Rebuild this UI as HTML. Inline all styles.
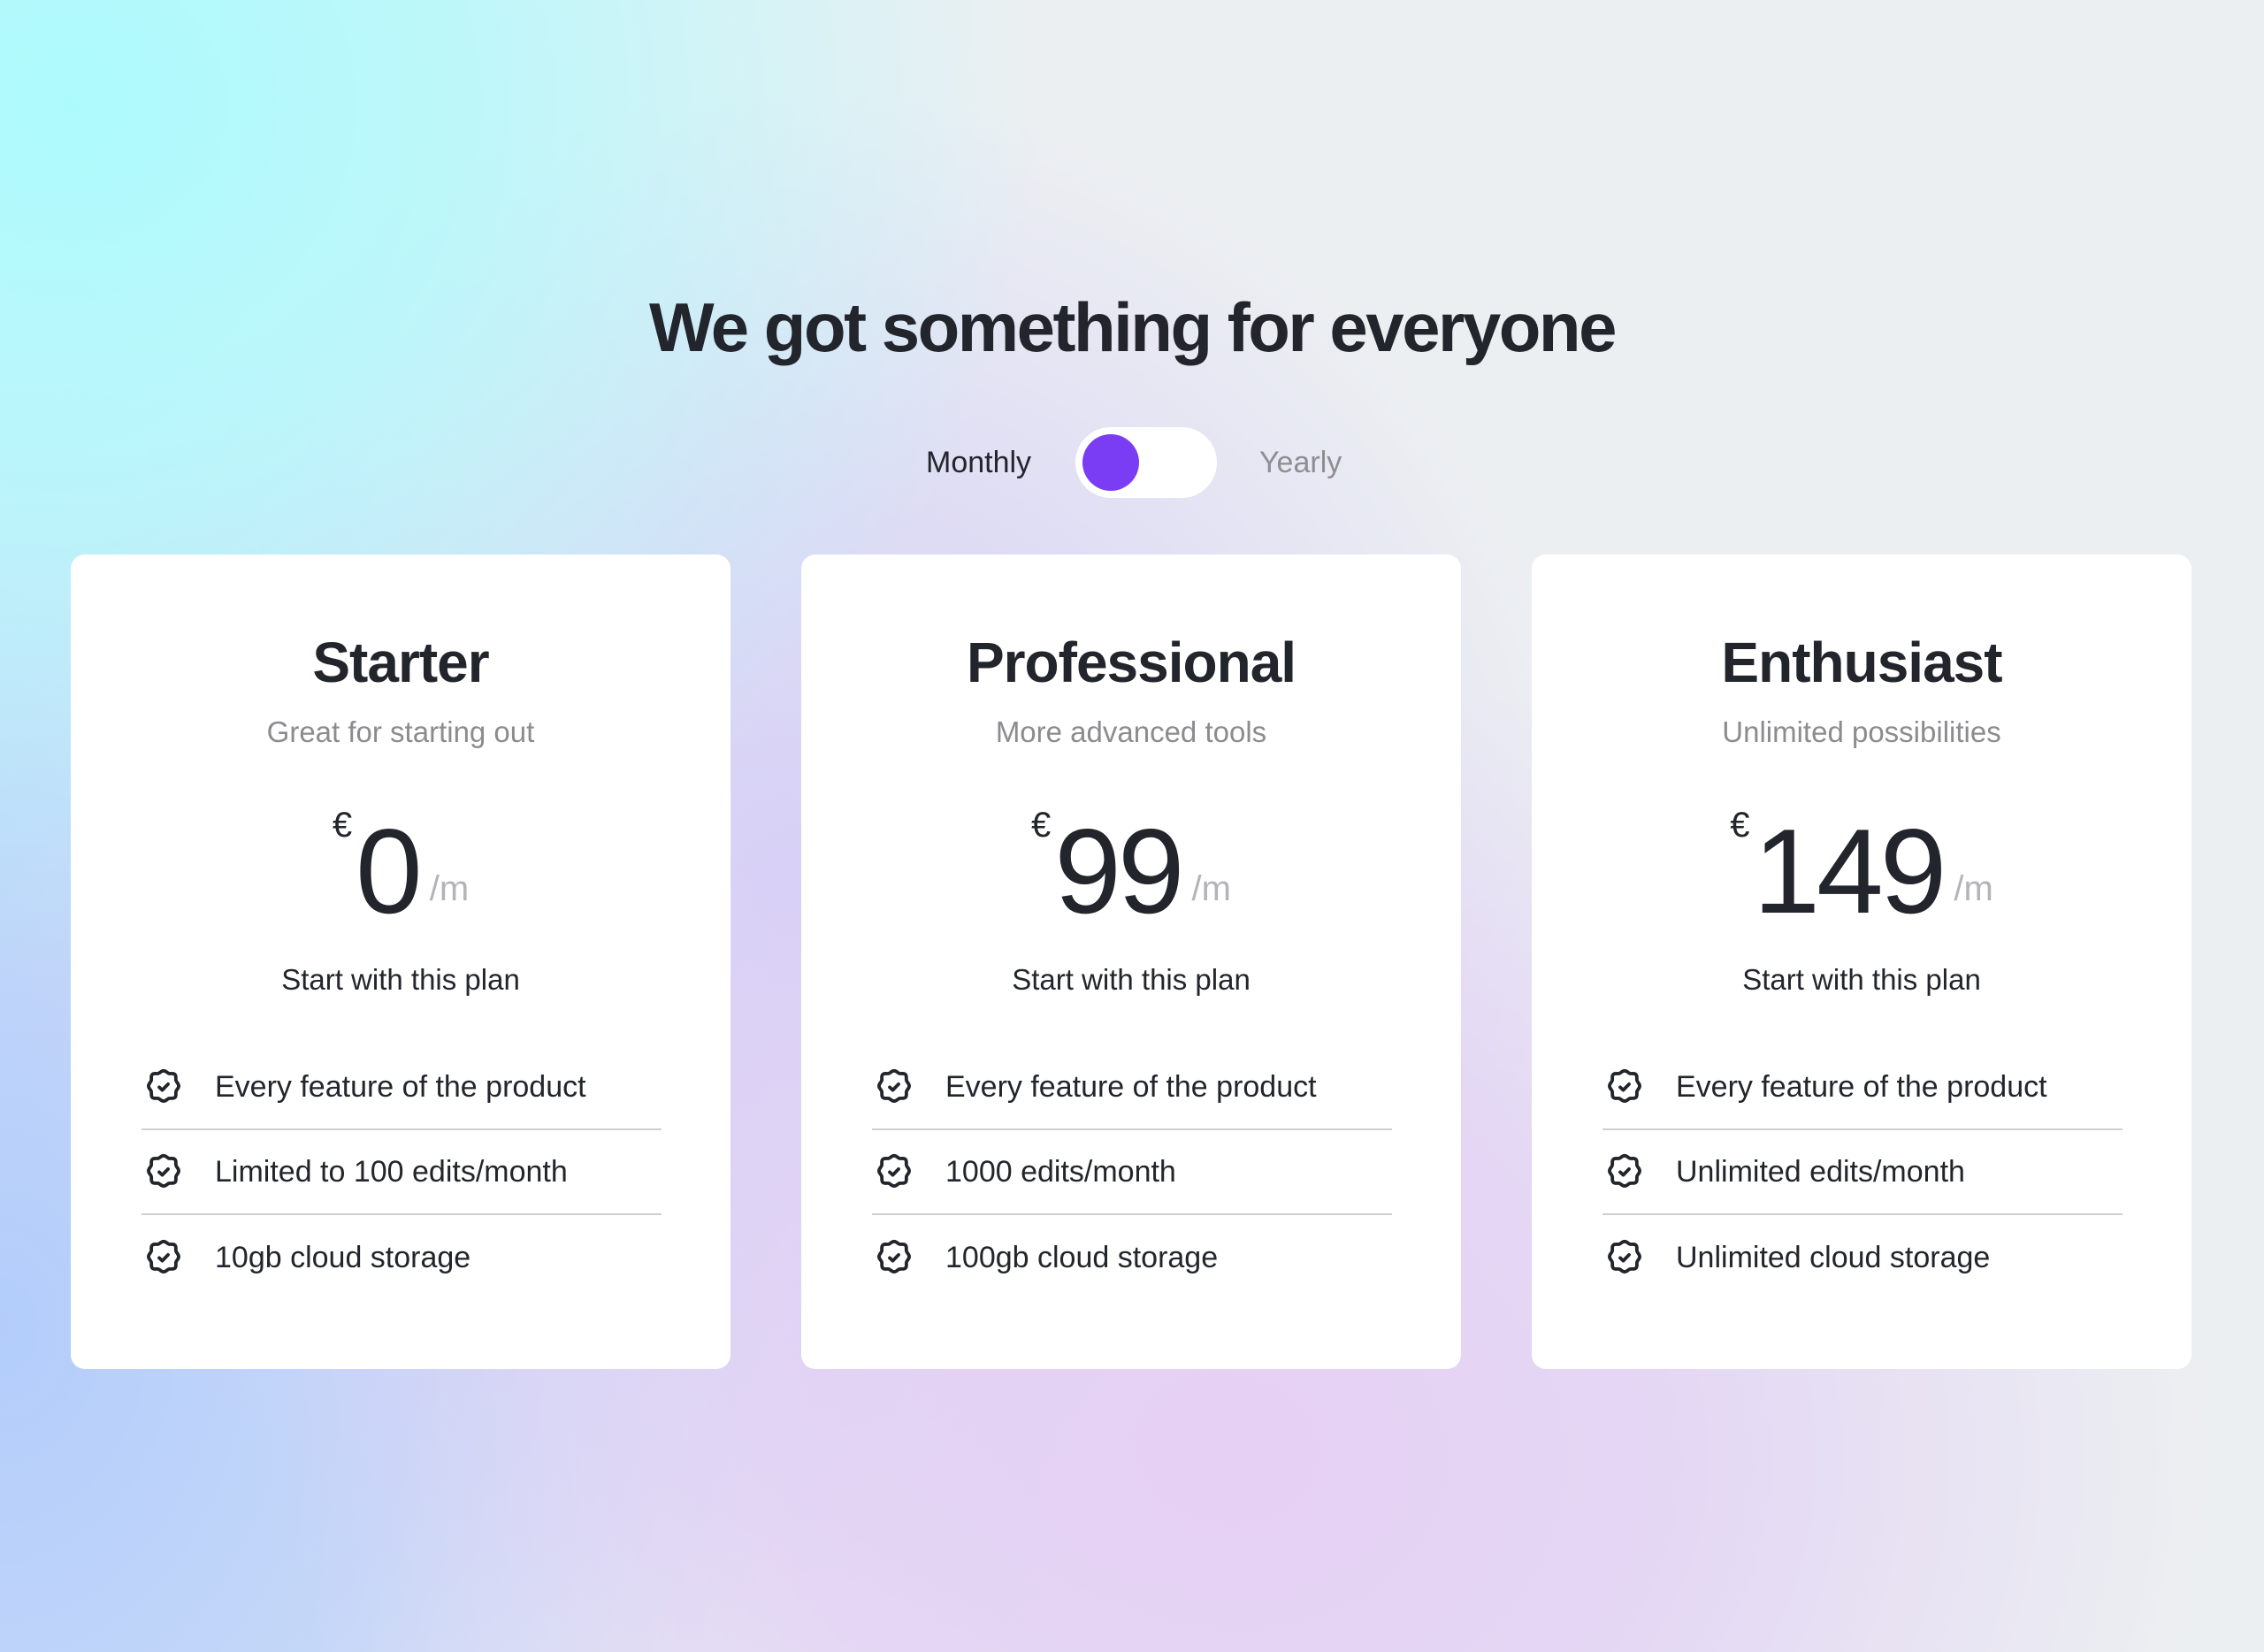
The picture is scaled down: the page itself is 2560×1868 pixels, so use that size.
<!DOCTYPE html>
<html><head><meta charset="utf-8"><style>
*{margin:0;padding:0;box-sizing:border-box}
html,body{width:2560px;height:1868px;overflow:hidden}
body{font-family:"Liberation Sans",sans-serif;color:#22252b;position:relative;
background:
radial-gradient(ellipse 1100px 1000px at 80px 120px,#adfafd 0%,rgba(173,250,253,0.75) 40%,rgba(173,250,253,0) 100%),
radial-gradient(ellipse 1100px 900px at 1400px 1650px,#e6d0f4 0%,rgba(225,205,245,0.7) 45%,rgba(225,205,245,0) 100%),
radial-gradient(ellipse 900px 900px at 900px 1000px,#d6d0f6 0%,rgba(214,208,246,0.6) 50%,rgba(214,208,246,0) 100%),
radial-gradient(ellipse 900px 1200px at 0px 1500px,#b3cdfb 0%,rgba(179,205,251,0.7) 50%,rgba(179,205,251,0) 100%),
#eceff2;}
h1{position:absolute;top:325px;left:0;width:2560px;text-align:center;font-size:78px;font-weight:bold;letter-spacing:-2.5px}
.tg{position:absolute;top:504px;font-size:34px}
.pill{position:absolute;left:1216px;top:483px;width:160px;height:80px;border-radius:40px;background:#fff}
.knob{position:absolute;left:8px;top:8px;width:64px;height:64px;border-radius:50%;background:#7b3df3}
.card{position:absolute;top:627px;width:746px;height:921px;background:#fff;border-radius:16px}
.t{position:absolute;width:100%;text-align:center;font-size:64px;font-weight:bold;letter-spacing:-1px}
.s{position:absolute;width:100%;text-align:center;font-size:33px;color:#8c8c90}
.price{position:absolute;width:100%;text-align:center;white-space:nowrap;height:140px}
.price .e{font-size:40px;vertical-align:top;position:relative;top:-6px;margin-right:4px}
.price .n{font-size:136px;line-height:1;letter-spacing:-4px}
.price .m{font-size:40px;color:#b4b4b8;margin-left:12px;position:relative;top:-14px}
.st{position:absolute;width:100%;text-align:center;font-size:33px}
.f{position:absolute;left:80px;width:588px;height:96px;font-size:34px;display:flex;align-items:center}
.f svg{width:46px;height:46px;margin-left:2px;margin-right:35px;flex:none}
.f.b{border-bottom:2px solid #cfcfcf}
</style></head><body>
<h1>We got something for everyone</h1>
<div class="tg" style="left:1047px">Monthly</div>
<div class="pill"><div class="knob"></div></div>
<div class="tg" style="left:1424px;color:#8d8d92">Yearly</div>

<svg width="0" height="0" style="position:absolute"><defs><symbol id="ck" viewBox="0 0 24 24"><path fill="none" stroke="#22252b" stroke-width="2" stroke-linecap="round" stroke-linejoin="round" d="M12 2.5c1.5 0 2 1.3 3.2 1.6c1.2 .3 2.6 -.4 3.5 .6c.9 .9 .3 2.3 .6 3.5c.3 1.2 1.6 1.7 1.6 3.3c0 1.5 -1.3 2 -1.6 3.2c-.3 1.2 .4 2.6 -.6 3.5c-.9 .9 -2.3 .3 -3.5 .6c-1.2 .3 -1.7 1.6 -3.2 1.6c-1.5 0 -2 -1.3 -3.2 -1.6c-1.2 -.3 -2.6 .4 -3.5 -.6c-.9 -.9 -.3 -2.3 -.6 -3.5c-.3 -1.2 -1.6 -1.7 -1.6 -3.2c0 -1.6 1.3 -2.1 1.6 -3.3c.3 -1.2 -.4 -2.6 .6 -3.5c.9 -1 2.3 -.3 3.5 -.6c1.2 -.3 1.7 -1.6 3.2 -1.6zM9.4 12.2l1.8 1.7l3.4 -3.5"/></symbol></defs></svg>

<div class="card" style="left:80px">
<div class="t" style="top:85px">Starter</div>
<div class="s" style="top:182px">Great for starting out</div>
<div class="price" style="top:290px"><span class="e">€</span><span class="n">0</span><span class="m">/m</span></div>
<div class="st" style="top:462px">Start with this plan</div>
<div class="f b" style="top:555px"><svg><use href="#ck"/></svg>Every feature of the product</div>
<div class="f b" style="top:651px"><svg><use href="#ck"/></svg>Limited to 100 edits/month</div>
<div class="f" style="top:747px"><svg><use href="#ck"/></svg>10gb cloud storage</div>
</div>
<div class="card" style="left:906px">
<div class="t" style="top:85px">Professional</div>
<div class="s" style="top:182px">More advanced tools</div>
<div class="price" style="top:290px"><span class="e">€</span><span class="n">99</span><span class="m">/m</span></div>
<div class="st" style="top:462px">Start with this plan</div>
<div class="f b" style="top:555px"><svg><use href="#ck"/></svg>Every feature of the product</div>
<div class="f b" style="top:651px"><svg><use href="#ck"/></svg>1000 edits/month</div>
<div class="f" style="top:747px"><svg><use href="#ck"/></svg>100gb cloud storage</div>
</div>
<div class="card" style="left:1732px">
<div class="t" style="top:85px">Enthusiast</div>
<div class="s" style="top:182px">Unlimited possibilities</div>
<div class="price" style="top:290px"><span class="e">€</span><span class="n">149</span><span class="m">/m</span></div>
<div class="st" style="top:462px">Start with this plan</div>
<div class="f b" style="top:555px"><svg><use href="#ck"/></svg>Every feature of the product</div>
<div class="f b" style="top:651px"><svg><use href="#ck"/></svg>Unlimited edits/month</div>
<div class="f" style="top:747px"><svg><use href="#ck"/></svg>Unlimited cloud storage</div>
</div>
</body></html>
